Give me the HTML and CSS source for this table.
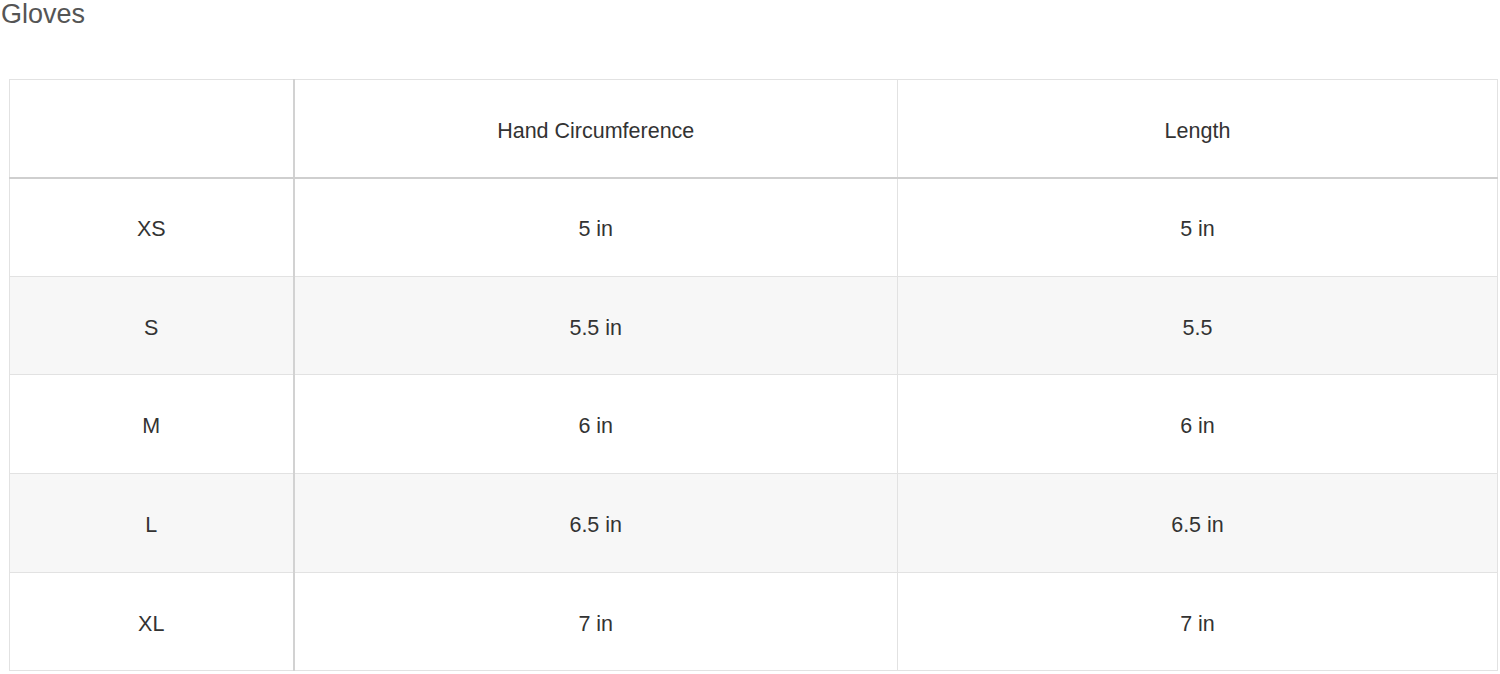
FILE: index.html
```html
<!DOCTYPE html>
<html lang="en">
<head>
<meta charset="utf-8">
<title>Gloves</title>
<link rel="stylesheet" href="styles.css">
</head>
<body>
<h2 class="title">Gloves</h2>
<table class="size-table">
  <colgroup>
    <col class="c1">
    <col class="c2">
    <col class="c3">
  </colgroup>
  <thead>
    <tr>
      <th class="first"></th>
      <th>Hand Circumference</th>
      <th>Length</th>
    </tr>
  </thead>
  <tbody>
    <tr><td class="first">XS</td><td>5 in</td><td>5 in</td></tr>
    <tr class="alt"><td class="first">S</td><td>5.5 in</td><td>5.5</td></tr>
    <tr><td class="first">M</td><td>6 in</td><td>6 in</td></tr>
    <tr class="alt"><td class="first">L</td><td>6.5 in</td><td>6.5 in</td></tr>
    <tr><td class="first">XL</td><td>7 in</td><td>7 in</td></tr>
  </tbody>
</table>
</body>
</html>
```

FILE: styles.css
```css
html, body {
  margin: 0;
  padding: 0;
  background: #fff;
}
body {
  font-family: "Liberation Sans", Arial, sans-serif;
  color: #333;
}
.title {
  margin: 0 0 0 1px;
  font-size: 27px;
  line-height: 28px;
  font-weight: normal;
  color: #555;
}
.size-table {
  margin: 51px 0 0 9px;
  width: 1488px;
  table-layout: fixed;
  border-collapse: collapse;
  border: 1px solid #dcdcdc;
}
.c1 { width: 284px; }
.c2 { width: 604px; }
.c3 { width: 600px; }
.size-table th,
.size-table td {
  border: 1px solid #e2e2e2;
  text-align: center;
  vertical-align: middle;
  font-size: 21.5px;
  font-weight: normal;
  color: #333;
  padding: 5px 0 0;
}
.size-table thead th { padding-top: 6px; }
.size-table thead tr { height: 98px; }
.size-table thead th { border-bottom: 2px solid #cfcfcf; }
.size-table tbody tr { height: 98.7px; }
.size-table .first { border-right: 2px solid #d2d2d2; }
.size-table tr.alt td { background: #f7f7f7; }
```
